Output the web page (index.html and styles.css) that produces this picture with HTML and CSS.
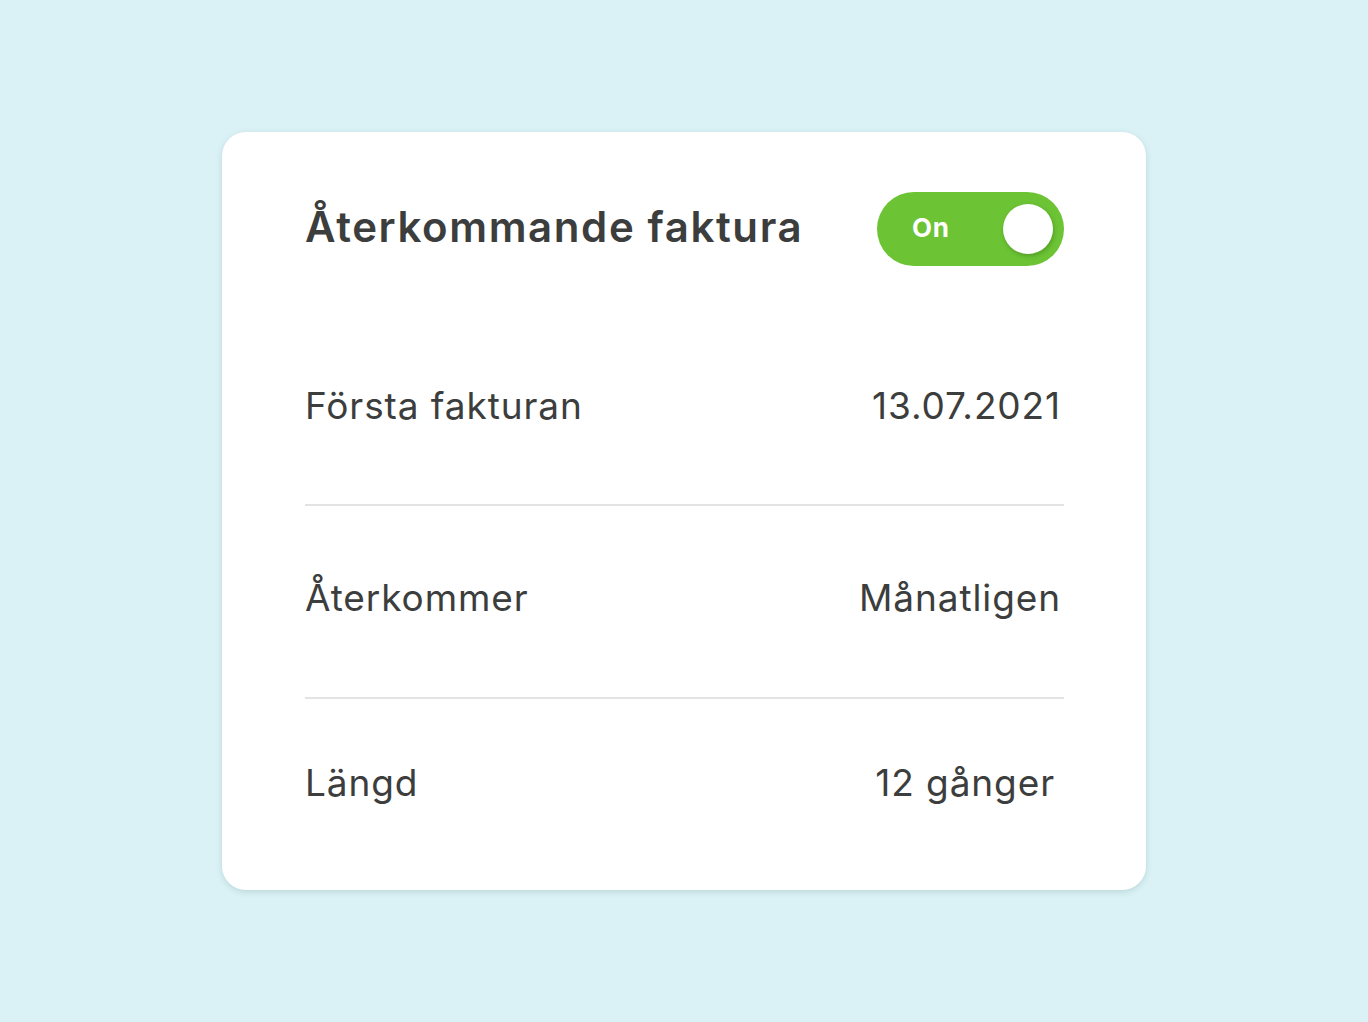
FILE: index.html
```html
<!DOCTYPE html>
<html lang="sv">
<head>
<meta charset="utf-8">
<title>Återkommande faktura</title>
<link rel="stylesheet" href="styles.css">
</head>
<body>
<main class="page">
  <section class="card">
    <header class="card-header">
      <h1 class="title">Återkommande faktura</h1>
      <div class="toggle" role="switch" aria-checked="true">
        <span class="toggle-label">On</span>
        <span class="toggle-knob"></span>
      </div>
    </header>
    <div class="row row--first">
      <span class="label">Första fakturan</span>
      <span class="value">13.07.2021</span>
    </div>
    <div class="row row--second">
      <span class="label">Återkommer</span>
      <span class="value">Månatligen</span>
    </div>
    <div class="row row--last">
      <span class="label">Längd</span>
      <span class="value value--inset">12 gånger</span>
    </div>
  </section>
</main>
</body>
</html>
```
FILE: styles.css
```css
* { box-sizing: border-box; }
html, body { margin: 0; padding: 0; }
body {
  background: #daf2f5;
  font-family: "Inter", "Lato", "Liberation Sans", sans-serif;
  color: #3c3d3d;
}
.page {
  height: 1022px;
  display: flex;
  align-items: center;
  justify-content: center;
}
.card {
  width: 924px;
  height: 758px;
  background: #ffffff;
  border-radius: 24px;
  box-shadow: 0 2px 6px rgba(40, 80, 90, 0.16);
  padding: 60px 82px 0 83px;
  display: flex;
  flex-direction: column;
}
.card-header {
  display: flex;
  align-items: center;
  justify-content: space-between;
  height: 74px;
}
.title {
  margin: 0;
  font-size: 42px;
  font-weight: 600;
  line-height: 48px;
  letter-spacing: 1.6px;
  margin-top: -4px;
}
.toggle {
  width: 187px;
  height: 74px;
  border-radius: 37px;
  background: #6cc334;
  display: flex;
  align-items: center;
  justify-content: space-between;
  padding: 0 11px 0 35px;
}
.toggle-label {
  color: #ffffff;
  font-weight: 700;
  font-size: 26px;
  line-height: 30px;
  letter-spacing: 0.8px;
  margin-top: -3px;
}
.toggle-knob {
  width: 50px;
  height: 50px;
  border-radius: 50%;
  background: #ffffff;
  box-shadow: 1px 2px 4px rgba(40, 90, 10, 0.35);
}
.row {
  display: flex;
  align-items: center;
  justify-content: space-between;
  font-size: 37px;
  line-height: 44px;
  letter-spacing: 0.9px;
  border-bottom: 2px solid #e3e3e3;
  padding-right: 3px;
}
.row--first { padding-top: 118px; padding-bottom: 76px; }
.row--second { padding-top: 70px; padding-bottom: 77px; }
.row--last { padding-top: 62px; border-bottom: none; }
.value--inset { margin-right: 6px; }
```
